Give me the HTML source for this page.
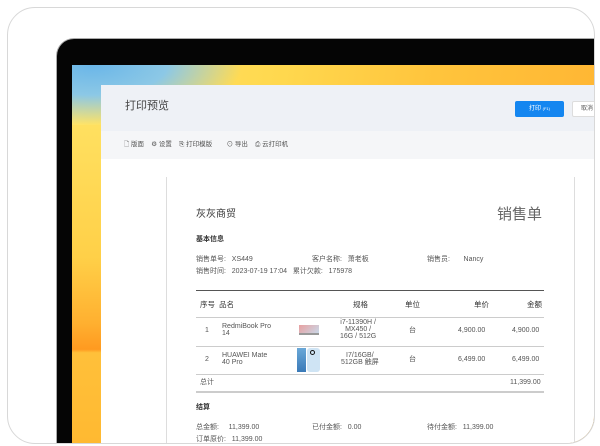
<!DOCTYPE html>
<html><head><meta charset="utf-8"><style>
*{margin:0;padding:0;box-sizing:border-box}
html,body{width:600px;height:446px;overflow:hidden}
body{background:#fff;position:relative;font-family:"Liberation Sans","Noto Sans CJK SC",sans-serif;color:#333}
.card{position:absolute;left:7px;top:7px;width:588px;height:437px;border:1px solid #d8d8d8;border-radius:28px;overflow:hidden;background:#fff}
.bezel{position:absolute;left:49px;top:31px;width:600px;height:420px;background:#050505;border-radius:17px;box-shadow:0 0 0 1px #aaa}
.screen{position:absolute;left:64px;top:57px;width:540px;height:390px;overflow:hidden;background:linear-gradient(100deg,#ffe56a 0%,#ffd84e 35%,#ffc43c 60%,#ffb030 100%)}
.sky{position:absolute;left:0;top:0;width:240px;height:90px;background:radial-gradient(ellipse 150px 60px at 20px 0px,#6ab6e8 0%,#8cc8e6 50%,rgba(255,229,106,0) 100%)}
.strip{position:absolute;left:0;top:60px;width:29px;height:330px;background:linear-gradient(180deg,#ffe060 0%,#ffd048 40%,#ffb030 60%,#ff9a20 68%,#ffc03a 69%,#ffb830 100%)}
.win{position:absolute;left:93px;top:77px;width:520px;height:370px;background:#fff;overflow:hidden}
.hdr{position:absolute;left:0;top:0;width:100%;height:46px;background:#eef1f6}
.tb{position:absolute;left:0;top:46px;width:100%;height:28px;background:#f5f6f8}
.a{position:absolute;white-space:nowrap;font-size:7px;line-height:1}
.paper{position:absolute;left:65px;top:92px;width:409px;height:300px;border-left:1px solid #ddd;border-right:1px solid #ddd;background:#fff}
.l{position:absolute;height:1px;background:#ccc;left:196px;width:348px}
</style></head><body>
<div class="card">
<div class="bezel"></div>
<div class="screen"><div class="sky"></div><div class="strip"></div></div>
<div class="win">
<div class="hdr"></div><div class="tb"></div>
<div class="paper"></div>
<div class="a" style="left:24px;top:16px;font-size:11px;color:#444">打印预览</div>
<div class="a" style="left:414px;top:16px;width:49px;height:16px;background:#1486f0;border-radius:2px;color:#fff;font-size:6px;line-height:16px;text-align:center">打印 <span style="font-size:4px">(F1)</span></div>
<div class="a" style="left:471px;top:16px;width:40px;height:16px;background:#fff;border:1px solid #ddd;border-radius:2px;color:#555;font-size:6px;line-height:14px;padding-left:8px">取消</div>
<div class="a" style="left:23px;top:57px;font-size:6.5px;color:#555">🗋 版面 &nbsp;&nbsp;&nbsp;⚙ 设置 &nbsp;&nbsp;&nbsp;⎘ 打印模版 &nbsp;&nbsp;&nbsp;&nbsp;&nbsp;&nbsp;&nbsp;⊙ 导出 &nbsp;&nbsp;&nbsp;⎙ 云打印机</div>
</div>
</div>
<div class="a" style="left:196px;top:210px;font-size:10px;color:#333">灰灰商贸</div>
<div class="a" style="left:497px;top:207px;font-size:15px;color:#666">销售单</div>
<div class="a" style="left:196px;top:236px;font-weight:bold;color:#333">基本信息</div>
<div class="a" style="left:196px;top:256px;color:#555">销售单号: &nbsp;&nbsp;XS449</div>
<div class="a" style="left:312px;top:256px;color:#555">客户名称: &nbsp;&nbsp;萧老板</div>
<div class="a" style="left:427px;top:256px;color:#555">销售员: &nbsp;&nbsp;&nbsp;&nbsp;&nbsp;&nbsp;Nancy</div>
<div class="a" style="left:196px;top:268px;color:#555">销售时间: &nbsp;&nbsp;2023-07-19 17:04 &nbsp;&nbsp;累计欠款: &nbsp;&nbsp;175978</div>
<div class="l" style="top:290px;background:#555;height:1px"></div>
<div class="a" style="left:200px;top:301px;color:#333;font-size:7.5px">序号 &nbsp;品名</div>
<div class="a" style="left:353px;top:301px;color:#333;font-size:7.5px">规格</div>
<div class="a" style="left:405px;top:301px;color:#333;font-size:7.5px">单位</div>
<div class="a" style="left:474px;top:301px;color:#333;font-size:7.5px">单价</div>
<div class="a" style="left:527px;top:301px;color:#333;font-size:7.5px">金额</div>
<div class="l" style="top:317px"></div>
<div class="a" style="left:205px;top:327px;color:#555">1</div>
<div class="a" style="left:222px;top:323px;color:#555;line-height:7px">RedmiBook Pro<br>14</div>
<div style="position:absolute;left:299px;top:325px;width:20px;height:10px;background:linear-gradient(135deg,#e8a0a0,#c9d8e8);border-bottom:2px solid #999"></div>
<div class="a" style="left:340px;top:319px;color:#555;text-align:center;line-height:7px">i7-11390H /<br>MX450 /<br>16G / 512G</div>
<div class="a" style="left:409px;top:327px;color:#555">台</div>
<div class="a" style="left:458px;top:327px;color:#555">4,900.00</div>
<div class="a" style="left:512px;top:327px;color:#555">4,900.00</div>
<div class="l" style="top:346px"></div>
<div class="a" style="left:205px;top:356px;color:#555">2</div>
<div class="a" style="left:222px;top:352px;color:#555;line-height:7px">HUAWEI Mate<br>40 Pro</div>
<div style="position:absolute;left:297px;top:348px;width:9px;height:24px;background:linear-gradient(#6aa8d8,#3a7ab8)"></div>
<div style="position:absolute;left:307px;top:348px;width:13px;height:24px;background:#cfe4f4;border-radius:3px"></div>
<div style="position:absolute;left:310px;top:350px;width:5px;height:5px;border-radius:50%;border:1.5px solid #111"></div>
<div class="a" style="left:341px;top:352px;color:#555;text-align:center;line-height:7px">I7/16GB/<br>512GB 触屏</div>
<div class="a" style="left:409px;top:356px;color:#555">台</div>
<div class="a" style="left:458px;top:356px;color:#555">6,499.00</div>
<div class="a" style="left:512px;top:356px;color:#555">6,499.00</div>
<div class="l" style="top:374px"></div>
<div class="a" style="left:200px;top:379px;color:#555">总计</div>
<div class="a" style="left:510px;top:379px;color:#555">11,399.00</div>
<div class="l" style="top:391px;height:1.5px"></div>
<div class="a" style="left:196px;top:404px;font-weight:bold;color:#333">结算</div>
<div class="a" style="left:196px;top:424px;color:#555">总金额: &nbsp;&nbsp;&nbsp;&nbsp;11,399.00</div>
<div class="a" style="left:312px;top:424px;color:#555">已付金额: &nbsp;&nbsp;0.00</div>
<div class="a" style="left:427px;top:424px;color:#555">待付金额: &nbsp;&nbsp;11,399.00</div>
<div class="a" style="left:196px;top:436px;color:#555">订单原价: &nbsp;&nbsp;11,399.00</div>
</body></html>
